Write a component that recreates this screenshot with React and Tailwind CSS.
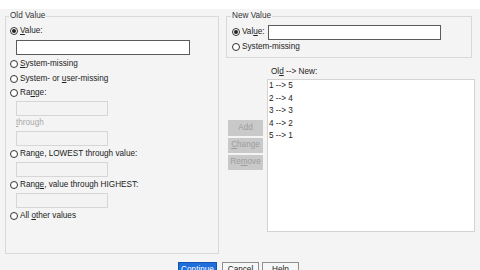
const Radio = ({ checked }) => (
	<span className="w-[8px] h-[8px] rounded-full border border-[#333] bg-white flex items-center justify-center shrink-0">
		{checked && <span className="w-[4px] h-[4px] rounded-full bg-[#222]" />}
	</span>
);

const Option = ({ checked, children, className = "" }) => (
	<div className={`flex items-center gap-[2px] h-[14px] ${className}`}>
		<Radio checked={checked} />
		<span className="leading-[14px]">{children}</span>
	</div>
);

const U = ({ children }) => <span className="underline underline-offset-1">{children}</span>;

const Field = ({ active, className = "" }) => (
	<div
		className={`h-[15px] ${
			active ? "bg-white border border-[#5a5a5a]" : "bg-[#f3f3f3] border border-[#d6d6d6]"
		} ${className}`}
	/>
);

const App = () => {
	return (
		<main
			className="w-[480px] h-[270px] overflow-hidden bg-[#f4f4f4] text-[#222] text-[8.2px]"
			style={{ fontFamily: '"Liberation Sans", Arial, sans-serif' }}
		>
			{/* top strip */}
			<div className="h-[9px] bg-white" />

			<div className="flex mt-[2px]">
				{/* Old Value */}
				<fieldset className="ml-[5px] w-[214px] h-[243px] border border-[#d9d9d9] pl-[4px] pt-[3px]">
					<legend className="-ml-[1px] px-[1px] leading-[10px] text-[#333]">Old Value</legend>
					<Option checked>
						<U>V</U>alue:
					</Option>
					<Field active className="ml-[6px] w-[174px] mt-[2px] h-[14px]" />
					<Option className="mt-[2px]">
						<U>S</U>ystem-missing
					</Option>
					<Option className="mt-[1px]">
						System- or <U>u</U>ser-missing
					</Option>
					<Option>
						Ra<U>n</U>ge:
					</Option>
					<Field className="ml-[6px] w-[92px] mt-[1px]" />
					<div className="ml-[6px] h-[14px] leading-[14px] text-[#a9a9a9]">
						<U>t</U>hrough
					</div>
					<Field className="ml-[6px] w-[92px] mt-[1px]" />
					<Option className="mt-[1px]">
						Ran<U>g</U>e, LOWEST through value:
					</Option>
					<Field className="ml-[6px] w-[92px] mt-[1px]" />
					<Option className="mt-[1px]">
						Rang<U>e</U>, value through HIGHEST:
					</Option>
					<Field className="ml-[6px] w-[92px] mt-[1px]" />
					<Option className="mt-[1px]">
						All <U>o</U>ther values
					</Option>
				</fieldset>

				{/* right column */}
				<div className="ml-[7px] w-[249px] flex flex-col">
					<fieldset className="w-[246px] h-[47px] border border-[#d9d9d9] pl-[5px] pt-[4px]">
						<legend className="-ml-[1px] px-[1px] leading-[10px] text-[#333]">New Value</legend>
						<div className="flex items-center h-[14px]">
							<Radio checked />
							<span className="ml-[2px] leading-[14px]">
								Val<U>u</U>e:
							</span>
							<Field active className="ml-[3px] w-[173px] h-[14px]" />
						</div>
						<Option className="mt-[1px]">System-missing</Option>
					</fieldset>

					<div className="flex mt-[8px]">
						<div className="ml-[2px] w-[35px] mt-[54px] flex flex-col gap-[2px] text-[#9d9d9d]">
							<div className="h-[16px] bg-[#c9c9c9] flex items-center justify-center">Add</div>
							<div className="h-[15px] bg-[#c9c9c9] flex items-center justify-center">
								<U>C</U>hange
							</div>
							<div className="h-[15px] bg-[#c9c9c9] flex items-center justify-center">
								Re<U>m</U>ove
							</div>
						</div>
						<div className="ml-[4px] w-[208px] flex flex-col">
							<div className="pl-[4px] h-[12px] leading-[12px]">
								Ol<U>d</U> --&gt; New:
							</div>
							<div className="mt-[1px] h-[153px] bg-white border border-[#d3d3d3] pl-[1px]">
								{["1 --> 5", "2 --> 4", "3 --> 3", "4 --> 2", "5 --> 1"].map((row) => (
									<div key={row} className="h-[12.5px] leading-[12.5px]">
										{row}
									</div>
								))}
							</div>
						</div>
					</div>
				</div>
			</div>

			{/* dialog buttons */}
			<div className="flex pl-[178px] mt-[8px]">
				<button className="w-[39px] h-[17px] bg-[#1c6fdc] border border-[#1553b0] text-white">Continue</button>
				<button className="ml-[5px] w-[37px] h-[17px] bg-[#f7f7f7] border border-[#8f8f8f]">Cancel</button>
				<button className="ml-[3px] w-[37px] h-[17px] bg-[#f7f7f7] border border-[#8f8f8f]">Help</button>
			</div>
		</main>
	);
};

export default App;
